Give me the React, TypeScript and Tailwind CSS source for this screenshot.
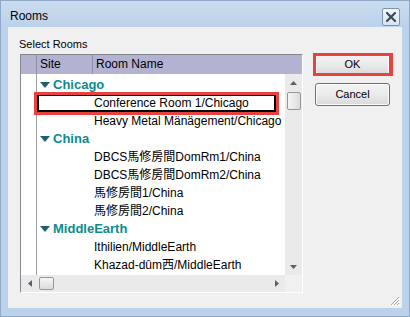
import React from 'react'

const FONT = { fontFamily: '"Liberation Sans", "Noto Sans CJK TC", sans-serif' }

type Row = { kind: 'group'; label: string } | { kind: 'item'; label: string; focused?: boolean }

const rows: Row[] = [
  { kind: 'group', label: 'Chicago' },
  { kind: 'item', label: 'Conference Room 1/Chicago', focused: true },
  { kind: 'item', label: 'Heavy Metal Mänägement/Chicago' },
  { kind: 'group', label: 'China' },
  { kind: 'item', label: 'DBCS馬修房間DomRm1/China' },
  { kind: 'item', label: 'DBCS馬修房間DomRm2/China' },
  { kind: 'item', label: '馬修房間1/China' },
  { kind: 'item', label: '馬修房間2/China' },
  { kind: 'group', label: 'MiddleEarth' },
  { kind: 'item', label: 'Ithilien/MiddleEarth' },
  { kind: 'item', label: 'Khazad-dûm西/MiddleEarth' },
]

function Arrow({ dir }: { dir: 'up' | 'down' | 'left' | 'right' }) {
  const pts = {
    up: '0,4 3.5,0 7,4',
    down: '0,0 7,0 3.5,4',
    left: '4,0 4,7 0,3.5',
    right: '0,0 4,3.5 0,7',
  }[dir]
  const vert = dir === 'up' || dir === 'down'
  return (
    <svg width={vert ? 7 : 4} height={vert ? 4 : 7} viewBox={vert ? '0 0 7 4' : '0 0 4 7'}>
      <polygon points={pts} fill="#5f5f5f" />
    </svg>
  )
}

function WinButton({ label }: { label: string }) {
  return (
    <div className="w-[75px] h-[23px] rounded-[3px] border border-[#707070] bg-linear-to-b from-[#f3f3f3] via-[#ebebeb] to-[#d9d9d9] shadow-[inset_0_0_0_1px_#fcfcfc] flex items-center justify-center text-[11px] text-black">
      {label}
    </div>
  )
}

export default function App() {
  return (
    <div style={FONT} className="w-[410px] h-[317px] bg-[#bcd2ea] border border-[#90a9c8] flex flex-col overflow-hidden">
      {/* title bar */}
      <div className="h-[26px] flex items-start justify-between pl-[9px] pr-[9px] bg-linear-to-b from-[#cadcef] to-[#bcd2ea]">
        <span className="mt-[8px] text-[12px] leading-[14px] text-black">Rooms</span>
        <div className="mt-[7px] w-[18px] h-[18px] border border-[#7b93b4] rounded-[2px] bg-linear-to-b from-[#f4f8fc] to-[#d6e2f0] flex items-center justify-center">
          <svg width="10" height="10" viewBox="0 0 10 10">
            <path d="M1 1 L9 9 M9 1 L1 9" stroke="#3d4a5e" strokeWidth="2.2" strokeLinecap="square" />
          </svg>
        </div>
      </div>

      {/* client area */}
      <div className="relative mx-[7px] h-[281px] bg-[#f0f0f0] flex pl-[12px]">
        <div className="flex flex-col pt-[11px]">
          <span className="-ml-px text-[11px] leading-[13px] text-black">Select Rooms</span>
          <div className="mt-[3px] w-[283px] h-[239px] border border-[#828790] border-r-white border-b-white flex flex-col bg-white">
            {/* header */}
            <div className="h-[19px] flex bg-[#b3b3d1] text-[12px] leading-[19px] text-black">
              <div className="w-[16px] border-r border-[#8f8fae]" />
              <div className="w-[56px] border-r border-[#8f8fae] pl-[3px]">Site</div>
              <div className="flex-1 pl-[3px]">Room Name</div>
            </div>
            {/* body + vertical scroll */}
            <div className="h-[201px] flex">
              <div className="w-[16px] border-r border-[#a0a0a0]" />
              <div className="w-[248px] pt-[2px] whitespace-nowrap">
                {rows.map((r, i) =>
                  r.kind === 'group' ? (
                    <div key={i} className="h-[18px] flex items-center pl-[3px] gap-[3px]">
                      <svg width="10" height="6" viewBox="0 0 10 6">
                        <polygon points="0,0 10,0 5,6" fill="#20606c" />
                      </svg>
                      <span className="text-[13px] leading-[18px] font-bold text-[#0d8a8e]">{r.label}</span>
                    </div>
                  ) : r.focused ? (
                    <div key={i} className="relative h-[18px] w-[239px] border-2 border-black pl-[55px] text-[12px] leading-[14px] text-black">
                      {r.label}
                      <div className="absolute -left-[5px] -right-[5px] -top-[4px] -bottom-[5px] border-[3px] border-[#e8423f]" />
                    </div>
                  ) : (
                    <div key={i} className="h-[18px] w-[248px] overflow-hidden pl-[57px] text-[12px] leading-[18px] text-black">
                      {r.label}
                    </div>
                  )
                )}
              </div>
              <div className="w-[17px] bg-[#eaeaea] flex flex-col items-center">
                <div className="h-[17px] flex items-center justify-center">
                  <Arrow dir="up" />
                </div>
                <div className="mt-[1px] w-[14px] h-[18px] rounded-[2px] border border-[#979797] bg-linear-to-r from-[#f5f5f5] to-[#dcdcdc]" />
                <div className="flex-1" />
                <div className="h-[17px] flex items-center justify-center">
                  <Arrow dir="down" />
                </div>
              </div>
            </div>
            {/* horizontal scroll */}
            <div className="h-[17px] flex">
              <div className="w-[264px] bg-[#eaeaea] flex items-center">
                <div className="w-[17px] flex justify-center">
                  <Arrow dir="left" />
                </div>
                <div className="ml-[1px] w-[15px] h-[13px] rounded-[2px] border border-[#979797] bg-linear-to-b from-[#f5f5f5] to-[#dcdcdc]" />
                <div className="flex-1" />
                <div className="w-[17px] flex justify-center">
                  <Arrow dir="right" />
                </div>
              </div>
              <div className="w-[17px] bg-[#f0f0f0]" />
            </div>
          </div>
        </div>

        <div className="ml-[12px] pt-[26px] flex flex-col gap-[7px]">
          <div className="relative">
            <WinButton label="OK" />
            <div className="absolute -left-[2px] -right-[3px] top-0 bottom-0 border-[3px] border-[#e8423f]" />
          </div>
          <WinButton label="Cancel" />
        </div>

        {/* size grip */}
        <svg className="absolute right-[2px] bottom-[2px]" width="12" height="12" viewBox="0 0 12 12">
          <path d="M11 3 L3 11 M11 6 L6 11 M11 9 L9 11" stroke="#a8a8a8" strokeWidth="1" />
          <path d="M12 4 L4 12 M12 7 L7 12 M12 10 L10 12" stroke="#ffffff" strokeWidth="1" />
        </svg>
      </div>
    </div>
  )
}
